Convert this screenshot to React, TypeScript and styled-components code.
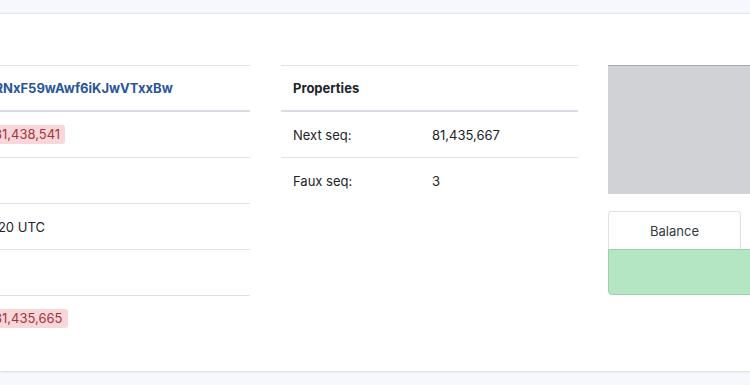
import styled, { createGlobalStyle } from "styled-components";

const GlobalStyle = createGlobalStyle`
  html, body {
    margin: 0;
    padding: 0;
    background: #f7f8fc;
    font-family: Inter, "Noto Sans", sans-serif;
    font-size: 13px;
    color: #212529;
    overflow: hidden;
  }
`;

const Page = styled.div`
  width: 750px;
  height: 385px;
  display: flex;
  flex-direction: column;
`;

const TopBar = styled.div`
  height: 13px;
  background: #f7f8fd;
  border-bottom: 1px solid #e2e4ea;
`;

const Card = styled.div`
  height: 357px;
  background: #fff;
  box-shadow: 0 1px 2px rgba(0, 0, 0, 0.12);
  padding-top: 51px;
  box-sizing: border-box;
  overflow: hidden;
`;

const Columns = styled.div`
  display: flex;
  align-items: flex-start;
  margin-left: -180px;
`;

const Table = styled.table<{ width: number; gap: number }>`
  flex: none;
  width: ${(p) => p.width}px;
  margin-left: ${(p) => p.gap}px;
  border-collapse: collapse;
  table-layout: fixed;
  border-top: 1px solid #dee2e6;
`;

const Th = styled.th`
  height: 44px;
  padding: 0 12px;
  text-align: left;
  font-weight: 700;
  white-space: nowrap;
  border-bottom: 2px solid #d9dce2;
`;

const Td = styled.td<{ last?: boolean }>`
  height: 45px;
  padding: 0 12px;
  white-space: nowrap;
  overflow: hidden;
  border-bottom: ${(p) => (p.last ? "none" : "1px solid #dee2e6")};
`;

const AddressLink = styled.a`
  color: #2a5699;
  font-weight: 700;
  text-decoration: none;
`;

const Badge = styled.span`
  display: inline-block;
  background: #f8d7da;
  color: #a8323a;
  border-radius: 3px;
  padding: 2px 5px;
  line-height: 15px;
`;

const Side = styled.div`
  flex: none;
  width: 300px;
  margin-left: 30px;
  display: flex;
  flex-direction: column;
`;

const Preview = styled.div`
  height: 128px;
  background: #d1d2d6;
  border-top: 1px solid #a8a9ad;
`;

const TabRow = styled.div`
  display: flex;
  margin-top: 17px;
`;

const Tab = styled.div<{ active?: boolean }>`
  width: 133px;
  height: 38px;
  box-sizing: border-box;
  display: flex;
  align-items: center;
  justify-content: center;
  border: 1px solid ${(p) => (p.active ? "#dee2e6" : "transparent")};
  border-bottom: none;
  border-radius: 4px 4px 0 0;
  color: #343a40;
`;

const Pane = styled.div`
  height: 46px;
  box-sizing: border-box;
  background: #b5e6c3;
  border: 1px solid #9bd1aa;
  border-radius: 0 0 0 4px;
`;

const leftRows: { label: string; value: React.ReactNode }[] = [
  { label: "Sequence", value: <Badge>81,438,541</Badge> },
  { label: "Owner count", value: "0" },
  { label: "Created", value: "1 20 UTC" },
  { label: "Flags", value: "0" },
  { label: "Prev. ledger", value: <Badge>81,435,665</Badge> },
];

export default function App() {
  return (
    <Page>
      <GlobalStyle />
      <TopBar />
      <Card>
        <Columns>
          <Table width={430} gap={0}>
            <colgroup>
              <col style={{ width: 157 }} />
              <col />
            </colgroup>
            <thead>
              <tr>
                <Th>Account</Th>
                <Th>
                  <AddressLink href="#">rRNxF59wAwf6iKJwVTxxBw</AddressLink>
                </Th>
              </tr>
            </thead>
            <tbody>
              {leftRows.map((r, i) => (
                <tr key={r.label}>
                  <Td last={i === leftRows.length - 1}>{r.label}</Td>
                  <Td last={i === leftRows.length - 1}>{r.value}</Td>
                </tr>
              ))}
            </tbody>
          </Table>
          <Table width={297} gap={31}>
            <colgroup>
              <col style={{ width: 139 }} />
              <col />
            </colgroup>
            <thead>
              <tr>
                <Th colSpan={2}>Properties</Th>
              </tr>
            </thead>
            <tbody>
              <tr>
                <Td>Next seq:</Td>
                <Td>81,435,667</Td>
              </tr>
              <tr>
                <Td last>Faux seq:</Td>
                <Td last>3</Td>
              </tr>
            </tbody>
          </Table>
          <Side>
            <Preview />
            <TabRow>
              <Tab active>Balance</Tab>
              <Tab>History</Tab>
            </TabRow>
            <Pane />
          </Side>
        </Columns>
      </Card>
    </Page>
  );
}
